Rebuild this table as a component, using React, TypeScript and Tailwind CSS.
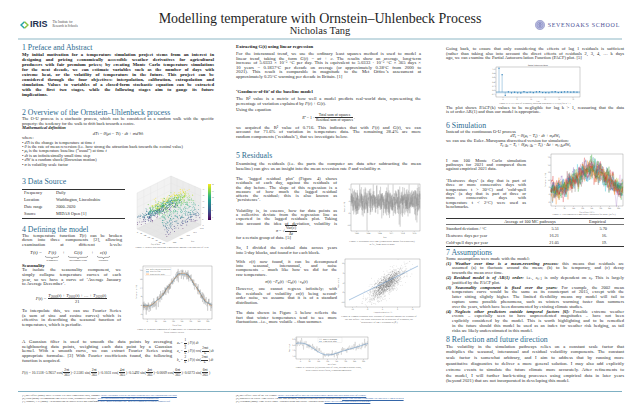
import React from 'react';

type N = React.ReactNode;

// deterministic noise so every render draws the same plots
function rng(seed: number) {
  let s = seed >>> 0;
  return () => {
    s = (s + 0x6d2b79f5) | 0;
    let t = Math.imul(s ^ (s >>> 15), 1 | s);
    t = (t + Math.imul(t ^ (t >>> 7), 61 | t)) ^ t;
    return ((t ^ (t >>> 14)) >>> 0) / 4294967296;
  };
}
function gauss(r: () => number) {
  const u = Math.max(r(), 1e-9);
  return Math.sqrt(-2 * Math.log(u)) * Math.cos(2 * Math.PI * r());
}
function seasonal(t: number) {
  const w = (2 * Math.PI * t) / 365;
  return 10.1518 - 5.9657 * Math.cos(w) - 2.5581 * Math.sin(w) + 0.1031 * Math.cos(2 * w) + 0.5492 * Math.sin(2 * w);
}
const VIR = ['#440154', '#482878', '#3e4989', '#31688e', '#26828e', '#1f9e89', '#35b779', '#6ece58', '#b5de2b', '#fde725'];
const vir = (v: number) => VIR[Math.max(0, Math.min(9, Math.floor(v * 10)))];
const TAB = ['#1f77b4', '#ff7f0e', '#2ca02c', '#d62728', '#9467bd', '#8c564b', '#e377c2', '#7f7f7f', '#bcbd22', '#17becf'];
const poly = (pts: [number, number][]) => pts.map((p) => p[0].toFixed(2) + ',' + p[1].toFixed(2)).join(' ');

function Frame({ x0, y0, x1, y1, xt = [], yt = [] }: { x0: number; y0: number; x1: number; y1: number; xt?: string[]; yt?: string[] }) {
  return (
    <g>
      <rect x={x0} y={y0} width={x1 - x0} height={y1 - y0} fill="none" stroke="#666" strokeWidth={0.3} />
      {xt.map((t, i) => {
        const x = x0 + ((x1 - x0) * (i + 0.5)) / xt.length;
        return (
          <g key={'x' + i}>
            <line x1={x} x2={x} y1={y1} y2={y1 + 0.8} stroke="#666" strokeWidth={0.25} />
            <text x={x} y={y1 + 2.6} fontSize={1.6} textAnchor="middle" fill="#444">{t}</text>
          </g>
        );
      })}
      {yt.map((t, i) => {
        const y = y1 - ((y1 - y0) * (i + 0.5)) / yt.length;
        return (
          <g key={'y' + i}>
            <line x1={x0 - 0.8} x2={x0} y1={y} y2={y} stroke="#666" strokeWidth={0.25} />
            <text x={x0 - 1.2} y={y + 0.55} fontSize={1.6} textAnchor="end" fill="#444">{t}</text>
          </g>
        );
      })}
    </g>
  );
}

function Fig3D() {
  const r = rng(21);
  const H = 36;
  const P = (d: number, y: number, z: number): [number, number] => [8 + d * 30 + y * 34, 57 + d * 13 - y * 17 - z * H];
  const pts: N[] = [];
  for (let k = 0; k < 1100; k++) {
    const d = r();
    const y = r();
    const T = seasonal(d * 365) + 0.6 * y + gauss(r) * 2.6;
    const z = Math.max(0, Math.min(1, (T + 4) / 28));
    const [sx, sy] = P(d, y, z);
    pts.push(<circle key={k} cx={sx} cy={sy} r={0.42} fill={vir((T + 2) / 22)} />);
  }
  const pane = (a: [number, number][]) => poly(a);
  const grid: N[] = [];
  for (let i = 1; i < 5; i++) {
    const v = i / 5;
    grid.push(<line key={'a' + i} x1={P(0, 0, v)[0]} y1={P(0, 0, v)[1]} x2={P(0, 1, v)[0]} y2={P(0, 1, v)[1]} stroke="#ddd" strokeWidth={0.25} />);
    grid.push(<line key={'b' + i} x1={P(0, 1, v)[0]} y1={P(0, 1, v)[1]} x2={P(1, 1, v)[0]} y2={P(1, 1, v)[1]} stroke="#ddd" strokeWidth={0.25} />);
    grid.push(<line key={'c' + i} x1={P(0, v, 0)[0]} y1={P(0, v, 0)[1]} x2={P(0, v, 1)[0]} y2={P(0, v, 1)[1]} stroke="#ddd" strokeWidth={0.25} />);
    grid.push(<line key={'d' + i} x1={P(v, 1, 0)[0]} y1={P(v, 1, 0)[1]} x2={P(v, 1, 1)[0]} y2={P(v, 1, 1)[1]} stroke="#ddd" strokeWidth={0.25} />);
    grid.push(<line key={'e' + i} x1={P(v, 0, 0)[0]} y1={P(v, 0, 0)[1]} x2={P(v, 1, 0)[0]} y2={P(v, 1, 0)[1]} stroke="#ddd" strokeWidth={0.25} />);
    grid.push(<line key={'f' + i} x1={P(0, v, 0)[0]} y1={P(0, v, 0)[1]} x2={P(1, v, 0)[0]} y2={P(1, v, 0)[1]} stroke="#ddd" strokeWidth={0.25} />);
  }
  const days = ['0', '50', '100', '150', '200', '250', '300', '350'];
  const years = ['2000', '2005', '2010', '2015', '2020'];
  return (
    <svg width={86} height={74} viewBox="0 0 86 74" fontFamily="DejaVu Sans">
      <defs>
        <linearGradient id="vir" x1="0" y1="1" x2="0" y2="0">
          {VIR.map((c, i) => (
            <stop key={i} offset={i / 9} stopColor={c} />
          ))}
        </linearGradient>
      </defs>
      <polygon points={pane([P(0, 0, 0), P(0, 1, 0), P(0, 1, 1), P(0, 0, 1)])} fill="#f2f2f2" stroke="#d0d0d0" strokeWidth={0.25} />
      <polygon points={pane([P(0, 1, 0), P(1, 1, 0), P(1, 1, 1), P(0, 1, 1)])} fill="#ececec" stroke="#d0d0d0" strokeWidth={0.25} />
      <polygon points={pane([P(0, 0, 0), P(1, 0, 0), P(1, 1, 0), P(0, 1, 0)])} fill="#e6e6e6" stroke="#d0d0d0" strokeWidth={0.25} />
      {grid}
      {pts}
      {days.map((t, i) => {
        const [x, y] = P((i + 0.5) / days.length, 0, 0);
        return <text key={t} x={x - 1.5} y={y + 3} fontSize={1.5} fill="#444" textAnchor="middle">{t}</text>;
      })}
      {years.map((t, i) => {
        const [x, y] = P(1, (i + 0.5) / years.length, 0);
        return <text key={t} x={x + 2} y={y + 2.5} fontSize={1.5} fill="#444">{t}</text>;
      })}
      {['-5', '0', '5', '10', '15', '20', '25'].map((t, i) => {
        const [x, y] = P(1, 1, i / 6);
        return <text key={t} x={x + 1.2} y={y + 0.5} fontSize={1.5} fill="#444">{t}</text>;
      })}
      <rect x={79} y={12} width={3} height={36} fill="url(#vir)" />
      {['-5', '0', '5', '10', '15', '20'].map((t, i) => (
        <text key={t} x={82.8} y={46 - i * 6.6} fontSize={1.4} fill="#444">{t}</text>
      ))}
      <text x={22} y={72.5} fontSize={1.6} fill="#444">Day of Year</text>
      <text x={62} y={70} fontSize={1.6} fill="#444">Year</text>
    </svg>
  );
}

function FigSeason() {
  const r = rng(3);
  const x0 = 9, x1 = 78, y0 = 2, y1 = 55;
  const X = (t: number) => x0 + (t / 365) * (x1 - x0);
  const Y = (v: number) => y1 - ((v + 1) / 21) * (y1 - y0);
  const raw: [number, number][] = [];
  const smooth: [number, number][] = [];
  const fit: [number, number][] = [];
  for (let t = 0; t <= 365; t++) {
    const f = seasonal(t);
    raw.push([X(t), Y(f + gauss(r) * 1.1)]);
    if (t % 3 === 0) {
      smooth.push([X(t), Y(f + 0.35 * Math.sin(t / 9))]);
      fit.push([X(t), Y(f)]);
    }
  }
  return (
    <svg width={80} height={64} viewBox="0 0 80 64" fontFamily="DejaVu Sans">
      <Frame x0={x0} y0={y0} x1={x1} y1={y1} xt={['0', '50', '100', '150', '200', '250', '300', '350']} yt={['0', '4', '8', '12', '16', '20']} />
      <polyline points={poly(raw)} fill="none" stroke="#9a9a9a" strokeWidth={0.3} />
      <polyline points={poly(smooth)} fill="none" stroke="#1f77b4" strokeWidth={0.5} />
      <polyline points={poly(fit)} fill="none" stroke="#ff7f0e" strokeWidth={0.5} strokeDasharray="1.2 0.6" />
      <rect x={11} y={3.5} width={26} height={8} fill="#fff" stroke="#ccc" strokeWidth={0.25} />
      {[['#9a9a9a', 'Daily average temperature'], ['#1f77b4', 'Gaussian filter'], ['#ff7f0e', 'Fitted Fourier Series']].map(([c, t], i) => (
        <g key={t}>
          <line x1={12} x2={15} y1={5.5 + i * 2.3} y2={5.5 + i * 2.3} stroke={c} strokeWidth={0.5} />
          <text x={16} y={6 + i * 2.3} fontSize={1.5} fill="#333">{t}</text>
        </g>
      ))}
      <text x={43} y={62} fontSize={1.6} fill="#444" textAnchor="middle">Day of Year</text>
      <text x={2.5} y={28} fontSize={1.6} fill="#444" textAnchor="middle" transform="rotate(-90 2.5 28)">Temperature (°C)</text>
    </svg>
  );
}

function FigResid() {
  const r = rng(5);
  const x0 = 8, x1 = 77, y0 = 2, y1 = 49;
  const pts: [number, number][] = [];
  for (let i = 0; i < 900; i++) {
    let v = gauss(r) * 2.4;
    if (r() < 0.03) v -= 5 * r();
    const y = Math.max(y0 + 0.5, Math.min(y1 - 0.5, 19 - v * 2.6));
    pts.push([x0 + ((x1 - x0) * i) / 899, y]);
  }
  return (
    <svg width={78} height={58} viewBox="0 0 78 58" fontFamily="DejaVu Sans">
      <Frame x0={x0} y0={y0} x1={x1} y1={y1} xt={['2000', '2004', '2008', '2012', '2016', '2020']} yt={['-10', '-5', '0', '5']} />
      <polyline points={poly(pts)} fill="none" stroke="#8a8a8a" strokeWidth={0.22} />
      <text x={42} y={55.5} fontSize={1.6} fill="#444" textAnchor="middle">Year</text>
      <text x={2} y={25} fontSize={1.6} fill="#444" textAnchor="middle" transform="rotate(-90 2 25)">Residual (°C)</text>
    </svg>
  );
}

function FigScatter() {
  const r = rng(9);
  const x0 = 8, x1 = 83, y0 = 2, y1 = 50;
  const pts: N[] = [];
  for (let i = 0; i < 1500; i++) {
    const a = gauss(r);
    const b = 0.72 * a + 0.62 * gauss(r);
    const x = 50 + a * 8.5;
    const y = 27 - b * 8;
    if (x > x0 + 0.5 && x < x1 - 0.5 && y > y0 + 0.5 && y < y1 - 0.5) pts.push(<circle key={i} cx={x} cy={y} r={0.4} fill="#555" fillOpacity={0.3} />);
  }
  return (
    <svg width={84} height={58} viewBox="0 0 84 58" fontFamily="DejaVu Sans">
      <Frame x0={x0} y0={y0} x1={x1} y1={y1} xt={['-10', '-5', '0', '5', '10']} yt={['-10', '-5', '0', '5', '10']} />
      {pts}
      <line x1={12} y1={43} x2={81} y2={9} stroke="#5b8fc4" strokeWidth={0.5} />
      <text x={46} y={56} fontSize={1.6} fill="#444" textAnchor="middle">Lagged residual ε(t−1)</text>
      <text x={2} y={26} fontSize={1.6} fill="#444" textAnchor="middle" transform="rotate(-90 2 26)">Residual ε(t)</text>
    </svg>
  );
}

function FigVol() {
  const r = rng(13);
  const x0 = 8, x1 = 80, y0 = 2, y1 = 24;
  const X = (t: number) => x0 + (t / 365) * (x1 - x0);
  const Y = (v: number) => y1 - ((v - 1.6) / 2.2) * (y1 - y0);
  const raw: [number, number][] = [];
  const sm: [number, number][] = [];
  for (let t = 0; t <= 365; t += 2) {
    const w = (2 * Math.PI * t) / 365;
    const f = 2.6 + 0.55 * Math.cos(w) + 0.12 * Math.sin(2 * w);
    raw.push([X(t), Y(f + gauss(r) * 0.22)]);
    sm.push([X(t), Y(f)]);
  }
  return (
    <svg width={82} height={31} viewBox="0 0 82 31" fontFamily="DejaVu Sans">
      <Frame x0={x0} y0={y0} x1={x1} y1={y1} xt={['0', '50', '100', '150', '200', '250', '300', '350']} yt={['2.0', '2.5', '3.0', '3.5']} />
      <polyline points={poly(raw)} fill="none" stroke="#aaa" strokeWidth={0.3} />
      <polyline points={poly(sm)} fill="none" stroke="#4f86bd" strokeWidth={0.55} />
      <rect x={30} y={2.8} width={24} height={5} fill="#fff" stroke="#ccc" strokeWidth={0.25} />
      <line x1={31} x2={34} y1={4.3} y2={4.3} stroke="#aaa" strokeWidth={0.4} />
      <text x={35} y={4.8} fontSize={1.4} fill="#333">Volatility (averaged)</text>
      <line x1={31} x2={34} y1={6.5} y2={6.5} stroke="#4f86bd" strokeWidth={0.4} />
      <text x={35} y={7} fontSize={1.4} fill="#333">Fitted Fourier series</text>
      <text x={44} y={30} fontSize={1.5} fill="#444" textAnchor="middle">Day of Year</text>
      <text x={2} y={13} fontSize={1.5} fill="#444" textAnchor="middle" transform="rotate(-90 2 13)">Volatility σ</text>
    </svg>
  );
}

function FigPacf() {
  const x0 = 8, x1 = 92, y0 = 4, y1 = 34;
  const Y = (v: number) => y1 - ((v + 0.2) / 1.25) * (y1 - y0);
  const r = rng(17);
  const vals = [1, 0.73, -0.13];
  for (let k = 3; k <= 25; k++) vals.push((r() - 0.5) * 0.08);
  const X = (k: number) => x0 + 3 + (k * (x1 - x0 - 6)) / 25;
  return (
    <svg width={94} height={39} viewBox="0 0 94 39" fontFamily="DejaVu Sans">
      <text x={50} y={3} fontSize={1.8} fill="#333" textAnchor="middle">Partial Autocorrelation</text>
      <Frame x0={x0} y0={y0} x1={x1} y1={y1} xt={['0', '5', '10', '15', '20', '25']} yt={['-0.2', '0.0', '0.2', '0.4', '0.6', '0.8', '1.0']} />
      <rect x={x0} y={Y(0.05)} width={x1 - x0} height={Y(-0.05) - Y(0.05)} fill="#1f77b4" fillOpacity={0.18} />
      <line x1={x0} x2={x1} y1={Y(0)} y2={Y(0)} stroke="#1f77b4" strokeWidth={0.3} />
      {vals.map((v, k) => (
        <g key={k}>
          <line x1={X(k)} x2={X(k)} y1={Y(0)} y2={Y(v)} stroke="#1f77b4" strokeWidth={0.35} />
          <circle cx={X(k)} cy={Y(v)} r={0.65} fill="#1f77b4" />
        </g>
      ))}
      <text x={50} y={38.5} fontSize={1.6} fill="#444" textAnchor="middle">Lag</text>
    </svg>
  );
}

function FigSim() {
  const x0 = 7, x1 = 79, y0 = 2, y1 = 54;
  const X = (t: number) => x0 + (t / 365) * (x1 - x0);
  const Y = (v: number) => y1 - ((v + 6) / 34) * (y1 - y0);
  const lines: N[] = [];
  for (let p = 0; p < 14; p++) {
    const r = rng(100 + p);
    let e = 0;
    const pts: [number, number][] = [];
    for (let t = 0; t <= 365; t += 2) {
      e = 0.7 * e + gauss(r) * 2.3;
      pts.push([X(t), Y(seasonal(t) + 0.8 + e)]);
    }
    lines.push(<polyline key={p} points={poly(pts)} fill="none" stroke={TAB[p % 10]} strokeWidth={0.3} strokeOpacity={0.85} />);
  }
  return (
    <svg width={80} height={61} viewBox="0 0 80 61" fontFamily="DejaVu Sans">
      <Frame x0={x0} y0={y0} x1={x1} y1={y1} xt={['0', '50', '100', '150', '200', '250', '300', '350']} yt={['-5', '0', '5', '10', '15', '20', '25']} />
      {lines}
      <text x={43} y={60.5} fontSize={1.6} fill="#444" textAnchor="middle">Day of Year (2021)</text>
      <text x={1.8} y={28} fontSize={1.6} fill="#444" textAnchor="middle" transform="rotate(-90 1.8 28)">Temperature (°C)</text>
    </svg>
  );
}

function Para({ lines, className = '', justifyLast = false, hang = false }: { lines: N[]; className?: string; justifyLast?: boolean; hang?: boolean }) {
  return (
    <div className={className}>
      {lines.map((l, i) => {
        const j = i < lines.length - 1 || justifyLast;
        return (
          <div key={i} className={`${j ? 'text-justify [text-align-last:justify]' : ''} ${hang && i > 0 ? 'pl-[6px]' : ''}`}>
            {l}
          </div>
        );
      })}
    </div>
  );
}

function H({ children, className = '' }: { children: N; className?: string }) {
  return <div className={`text-[7.8px] leading-[9px] text-[#2c6b8f] whitespace-nowrap ${className}`}>{children}</div>;
}

function Cap({ lines, className = '' }: { lines: N[]; className?: string }) {
  return (
    <div className={`text-[2.5px] leading-[3px] text-[#555] text-center ${className}`}>
      {lines.map((l, i) => (
        <div key={i}>{l}</div>
      ))}
    </div>
  );
}

function Frac({ n, d }: { n: N; d: N }) {
  return (
    <span className="inline-flex flex-col items-center align-middle leading-[1.15] mx-[0.5px]">
      <span className="px-[0.5px]">{n}</span>
      <span className="px-[0.5px] border-t-[0.5px] border-[#333] self-stretch text-center">{d}</span>
    </span>
  );
}

function Brace({ term, label, w }: { term: N; label: string; w: number }) {
  const m = w / 2;
  return (
    <span className="inline-flex flex-col items-center">
      <span>{term}</span>
      <svg width={w} height={3} viewBox={`0 0 ${w} 3`}>
        <path d={`M0.3 0 Q0.3 1.4 2 1.4 L${m - 1.5} 1.4 Q${m} 1.4 ${m} 2.8 Q${m} 1.4 ${m + 1.5} 1.4 L${w - 2} 1.4 Q${w - 0.3} 1.4 ${w - 0.3} 0`} stroke="#333" strokeWidth={0.4} fill="none" />
      </svg>
      <span className="not-italic text-[2.6px] leading-[3px] whitespace-nowrap">{label}</span>
    </span>
  );
}

function Header() {
  return (
    <div className="h-[38px] grid grid-cols-[1fr_auto_1fr] px-[20px]">
      <div className="self-start pt-[20px] flex items-center">
        <svg width={9} height={8} viewBox="0 0 18 16">
          <path d="M9 1.5 L2 8 L9 14.5" stroke="#26a3a6" strokeWidth={3} fill="none" />
          <path d="M9 1.5 L16 8 L9 14.5" stroke="#8cc540" strokeWidth={3} fill="none" />
        </svg>
        <span className="ml-[1px] font-['Liberation_Sans',Arial,sans-serif] font-bold text-[9px] leading-[9px] text-[#23304f]">IRIS</span>
        <span className="ml-[5px] text-[3.1px] leading-[3.4px] text-[#444]">
          The Institute for
          <br />
          Research in Schools
        </span>
      </div>
      <div className="self-start pt-[12px] text-center text-[#1f1f1f]">
        <div className="text-[14px] leading-[14px] whitespace-nowrap">Modelling temperature with Ornstein–Uhlenbeck Process</div>
        <div className="text-[10.5px] leading-[10px]">Nicholas Tang</div>
      </div>
      <div className="self-start justify-self-end pt-[20px] flex items-center">
        <svg width={10} height={10} viewBox="0 0 20 20">
          <circle cx={10} cy={10} r={9.3} fill="#b8bbe0" stroke="#7a7eb9" strokeWidth={1} />
          <circle cx={10} cy={10} r={6} fill="none" stroke="#7a7eb9" strokeWidth={0.8} />
          <path d="M10 5 L10 15 M6.5 9 Q10 5 13.5 9 M7 12 L13 12" stroke="#6a6eae" strokeWidth={1} fill="none" />
        </svg>
        <span className="ml-[3px] text-[6px] leading-[6px] tracking-[0.7px] text-[#4d5196]">SEVENOAKS SCHOOL</span>
      </div>
    </div>
  );
}

function LeftCol() {
  const body = 'text-[4.7px] leading-[4.6px]';
  return (
    <div className="w-[192px] flex flex-col">
      <H>1 Preface and Abstract</H>
      <Para
        className="text-[4.7px] leading-[5px] font-bold text-[#161616]"
        lines={[
          'My initial motivation for a temperature simulation project stems from an interest in',
          'designing and pricing economically accessible weather derivatives for agricultural',
          'producers with fair premium prices; by creating Monte Carlo temperature simulations',
          'for the next decade, we can estimate variables such as the number of days with',
          'extreme heat, or the volatility of temperature in the future. This project can be',
          'considered through the four objectives: interpolation, calibration, extrapolation and',
          'simulation. Values to variables of a closed-form stochastic equation can be extracted',
          'with the first two stages, while the following stages aim to gauge its future',
          'implications.',
        ]}
      />
      <H className="mt-[11px]">2 Overview of the Ornstein–Uhlenbeck process</H>
      <Para
        className="text-[4.3px] leading-[4.5px]"
        lines={[
          'The O-U process is a stochastic process, which can be considered as a random walk with the specific',
          'property: the tendency for the walk to drift back towards a centre.',
        ]}
      />
      <div className="text-[4.4px] leading-[4.5px] font-bold italic text-[#161616]">Mathematical definition</div>
      <div className="text-[4.6px] leading-[5.5px] text-center">
        <i>dT</i>
        <sub>t</sub> = <i>θ</i>(<i>μ</i>
        <sub>t</sub> − <i>T</i>
        <sub>t</sub>) · <i>dt</i> + <i>σ</i>
        <sub>t</sub>
        <i>dW</i>
        <sub>t</sub>
      </div>
      <div className="text-[4.3px] leading-[4.5px]">where:</div>
      <div className="text-[4.3px] leading-[4.4px]">
        <div>
          • <i>dT</i>
          <sub>t</sub> is the change in temperature at time <i>t</i>
        </div>
        <div>
          • <i>θ</i> is the rate of mean reversion (i.e. how strong the attraction back towards the central value)
        </div>
        <div>
          • <i>μ</i>
          <sub>t</sub> is the temperature baseline (“usual”) at time <i>t</i>
        </div>
        <div>
          • <i>dt</i> is an infinitesimally small time step
        </div>
        <div>
          • <i>dW</i> is a random shock (Brownian motion)
        </div>
        <div>
          • <i>σ</i> is volatility scale factor
        </div>
      </div>

      <div className="mt-[10px] flex">
        <div className="w-[108px] flex flex-col">
          <H>3 Data Source</H>
          <div className="mt-[3px] w-[103px] border-t-[0.8px] border-b-[0.8px] border-[#333] text-[4.3px] leading-[6.9px]">
            {[
              ['Frequency', 'Daily'],
              ['Location', 'Waddington, Lincolnshire'],
              ['Date range', '2000–2020'],
              ['Source', 'MIDAS Open [1]'],
            ].map(([a, b]) => (
              <div key={a} className="flex">
                <span className="w-[34px] pl-[2px]">{a}</span>
                <span>{b}</span>
              </div>
            ))}
          </div>
          <H className="mt-[6px]">4 Defining the model</H>
          <Para
            className={`${body} w-[100px]`}
            lines={[
              <>
                The temperature function <i>T</i>(<i>t</i>) can be broken
              </>,
              'down into three components [2], allowing',
              'examination at different levels:',
            ]}
            justifyLast
          />
          <div className="mt-[3px] w-[96px] flex items-start justify-center gap-[3px] text-[5px] leading-[5.5px] italic">
            <span>T(t) =</span>
            <Brace term="F(t)" label="seasonality" w={14} />
            <span className="not-italic">+</span>
            <Brace term="G(t)" label="interannual trend" w={20} />
            <span className="not-italic">+</span>
            <Brace term="ε(t)" label="residuals" w={13} />
          </div>
        </div>
        <div className="-mt-[5px] ml-[4px] w-[86px] flex flex-col">
          <Fig3D />
          <Cap lines={['Figure 1: Scatter plot showing Temperature against Year and Day of Year']} />
        </div>
      </div>

      <div className="mt-[2px] flex">
        <div className="w-[100px] flex flex-col">
          <div className="text-[4.7px] leading-[4.6px] font-bold text-[#161616]">Seasonality</div>
          <Para
            className={body}
            lines={['To isolate the seasonality component, we', 'simply collapse temperature curves of each', 'year, so we have a curve of ‘Average January', 'to Average December’.']}
          />
          <div className="mt-[6px] flex items-center justify-center text-[4.4px] leading-[5px] whitespace-nowrap">
            <i>F</i>(<i>t</i>) =&nbsp;
            <Frac
              n={
                <>
                  <i>T</i>
                  <sub>2000</sub>(<i>t</i>) + <i>T</i>
                  <sub>2001</sub>(<i>t</i>) + … + <i>T</i>
                  <sub>2020</sub>(<i>t</i>)
                </>
              }
              d="21"
            />
          </div>
          <Para
            className={`${body} mt-[5px]`}
            lines={['To interpolate this, we can use Fourier Series', '(a sum of sine and cosine curves) which is', 'effective in describing the seasonal function of', 'temperatures, which is periodic.']}
          />
        </div>
        <div className="ml-[13px] w-[80px] flex flex-col">
          <FigSeason />
          <Cap lines={['Figure 2: Seasonal component of temperature vs. Gaussian-smoothed and', 'fitted Fourier Series']} />
        </div>
      </div>

      <div className="mt-[5px] flex items-center">
        <Para
          className={`${body} w-[150px]`}
          lines={[
            'A Gaussian filter is used to smooth the data points by averaging',
            'neighbouring data points, weighting each data point by a Gaussian',
            'kernel. With a smooth curve, we can extract Fourier Series using',
            'appropriate formulae. [3] With Fourier coefficients found, the following',
            'function is acquired.',
          ]}
        />
        <div className="ml-[5px] text-[3.3px] leading-[7.5px] whitespace-nowrap">
          <div>
            <i>a</i>
            <sub>0</sub> = <Frac n="1" d={<i>L</i>} /> ∫ <i>F</i>(<i>t</i>) <i>dt</i>
          </div>
          <div>
            <i>a</i>
            <sub>n</sub> = <Frac n="2" d={<i>L</i>} /> ∫ <i>F</i>(<i>t</i>) cos(<Frac n="2πnt" d="L" />) <i>dt</i>
          </div>
          <div>
            <i>b</i>
            <sub>n</sub> = <Frac n="2" d={<i>L</i>} /> ∫ <i>F</i>(<i>t</i>) sin(<Frac n="2πnt" d="L" />) <i>dt</i>
          </div>
        </div>
      </div>
      <div className="mt-[3px] text-[3.7px] leading-[8px] whitespace-nowrap">
        <i>F</i>(<i>t</i>) = 10.1518−5.9657 cos(<Frac n="2πt" d="365" />)−2.5581 sin(<Frac n="2πt" d="365" />)+0.1031 cos(<Frac n="4πt" d="365" />)+0.5492 sin(<Frac n="4πt" d="365" />)−0.0009 cos(<Frac n="6πt" d="365" />)+0.0273 sin(<Frac n="6πt" d="365" />)
      </div>
    </div>
  );
}

function MiddleCol() {
  const body = 'text-[4.65px] leading-[4.5px]';
  const nb = 'text-[4.55px] leading-[4.3px]';
  return (
    <div className="ml-[22px] w-[185px] flex flex-col">
      <div className="mt-[1px] text-[4.7px] leading-[5px] font-bold text-[#161616]">Extracting G(t) using linear regression</div>
      <Para
        className={`${body} mt-[3px]`}
        lines={[
          'For the interannual trend, we use the ordinary least squares method is used to model a',
          <>
            linear trend, taking the form <i>G</i>(<i>t</i>) = <i>αt</i> + <i>c</i>. The results show an average, long-term
          </>,
          'increase of 5.0333 × 10⁻⁵ °C per day. This is equivalent to 5.0333 · 10⁻⁵ °C × 365 days ×',
          '10 years = 0.1837°C per decade on average (or approximately 0.38°C from 2000 to',
          '2021). This result is comparable in magnitude to the Met Office’s assessment at',
          'approximately 0.25°C warming per decade in Britain. [1]',
        ]}
      />
      <div className="mt-[10px] text-[4.7px] leading-[5px] font-bold text-[#161616]">‘Goodness-of-fit’ of the baseline model</div>
      <Para
        className={`${body} mt-[3px]`}
        lines={[
          'The R² value is a metric of how well a model predicts real-world data, representing the',
          <>
            percentage of variation explained by <i>F</i>(<i>t</i>) + <i>G</i>(<i>t</i>).
          </>,
        ]}
      />
      <div className={`${body} mt-[2px]`}>Using the equation</div>
      <div className="h-[10px] flex items-center justify-center text-[3.8px] leading-[4px]">
        <i>R</i>
        <sup>2</sup>&nbsp;= 1 − <Frac n="Total sum of squares" d="Residual sum of squares" /> .
      </div>
      <Para
        className={`${body} mt-[3px]`}
        lines={[
          <>
            we acquired the R² value of 0.716. This indicates that with <i>F</i>(<i>t</i>) and <i>G</i>(<i>t</i>), we can
          </>,
          'account for 71.6% of variation in temperature data. The remaining 28.4% are more',
          'random components (‘residuals’), that we investigate below.',
        ]}
      />
      <H className="mt-[12px]">5 Residuals</H>
      <Para
        className={`${body} mt-[2px]`}
        lines={[
          'Examining the residuals (i.e. the parts the computer are data after subtracting the mean',
          <>
            baseline) can give us an insight into the mean reversion rate <i>θ</i> and volatility <i>σ</i>.
          </>,
        ]}
      />
      <div className="mt-[6px] flex">
        <div className="w-[101px] flex flex-col">
          <Para
            className={nb}
            lines={[
              'The ‘lagged residual plot’ (Figure 4) shows',
              'residuals of each day, against the residuals of',
              'the day before. The slope of this regression is a',
              'measure of how much the lagged residual',
              'affects the residual; this is also known as',
              '‘persistence’.',
            ]}
          />
          <Para
            className={`${nb} mt-[6px]`}
            justifyLast
            lines={['Volatility is, in essence, how far data points as', 'a collective deviate from the regression line as', 'expected in the lagged residuals plot. Taking', 'into account the idea of deviation, volatility is']}
          />
          <div className="h-[10px] flex items-center justify-center text-[4.2px] leading-[4px]">
            <i>σ</i>&nbsp;= √<span className="border-t-[0.5px] border-[#333]"><Frac n={<>Var(<i>ε</i>)</>} d={<>Δ<i>t</i></>} /></span>
          </div>
          <div className={nb}>for a certain group of data. [5]</div>
          <Para className={`${nb} mt-[6px]`} lines={['So, I divided the residual data across years', <>into 5-day blocks, and found <i>σ</i> for each block.</>]} />
          <Para
            className={`${nb} mt-[5px]`}
            lines={[
              <>
                With <i>ε</i>(<i>t</i>) now found, it can be decomposed
              </>,
              'into seasonal, interannual, and noise',
              'components – much like how we did for the',
              'raw temperature.',
            ]}
          />
          <div className="mt-[1px] h-[8px] flex items-center justify-center text-[4.4px] leading-[4.4px]">
            <i>σ</i>(<i>t</i>) = <i>F</i>
            <sub>σ</sub>(<i>t</i>) + <i>G</i>
            <sub>σ</sub>(<i>t</i>) + <i>ε</i>
            <sub>σ</sub>(<i>t</i>)
          </div>
          <Para
            className="text-[4.55px] leading-[4.5px] mt-[1px]"
            lines={[
              'However, one cannot regress infinitely; with',
              <>
                the residuals of volatility <i>ε</i>
                <span className="text-[3.2px] align-[-0.4px]">σ</span>(<i>t</i>) being second-
              </>,
              'order noise, we assume that it is of a standard',
              'distribution.',
            ]}
          />
          <Para
            className={`${nb} mt-[6px]`}
            lines={['The data shown in Figure 5 below reflects the', 'fact that winter temperatures tend to see more', 'fluctuations –i.e., more volatile – than summer.']}
          />
        </div>
        <div className="w-[84px] flex flex-col items-end">
          <div className="mt-[5px]">
            <FigResid />
          </div>
          <Cap className="w-[78px]" lines={['Figure 3: Residuals over time (temperature minus fitted baseline)', 'in °C, from 2000 to 2020']} />
          <div className="mt-[11px]">
            <FigScatter />
          </div>
          <Cap className="w-[84px]" lines={['Figure 4: Lagged residuals plot: residual of each day against the residual of', 'the day before. The slope represents the persistence of residuals; the', '‘persistence’ of lag-1 residuals is (β₁)']} />
        </div>
      </div>
      <div className="mt-[11px] mx-auto flex flex-col items-center">
        <FigVol />
        <Cap lines={['Figure 5: Volatility (σ) across Day of Year, averaged across years,', 'with Fourier series fitted, Gaussian-smoothed']} />
      </div>
    </div>
  );
}

function RightCol() {
  const body = 'text-[4.55px] leading-[4.5px]';
  const bi = 'font-bold italic text-[#161616]';
  return (
    <div className="ml-[25px] w-[178px] flex flex-col">
      <Para
        className={`${body} mt-[4px]`}
        lines={[
          'Going back, to ensure that only considering the effects of lag 1 residuals is sufficient',
          '(rather than taking also into account the direct effects of residuals 2, 3, 4, … k days',
          'ago, we can examine the Partial Autocorrelation Function (PACF) plot. [5]',
        ]}
      />
      <div className="mt-[2px] mx-auto">
        <FigPacf />
      </div>
      <Cap lines={['Figure 6: PACF plot of residuals, showing negligible PACF(k) for k > 1']} />
      <Para
        className={`${body} mt-[1px]`}
        lines={['The plot shows PACF(k) values to be negligible for lag k > 1, reassuring that the data', 'is of order AR(1) and thus our model is appropriate.']}
      />
      <H className="mt-[6px]">6 Simulation</H>
      <div className={body}>Instead of the continuous O-U process</div>
      <div className="text-[4.5px] leading-[4.5px] text-center">
        <i>dT</i>
        <sub>t</sub> = <i>θ</i>(<i>μ</i>
        <sub>t</sub> − <i>T</i>
        <sub>t</sub>) · <i>dt</i> + <i>σ</i>
        <sub>t</sub>
        <i>dW</i>
        <sub>t</sub>
      </div>
      <div className={body}>we can use the Euler–Maruyama discretised version for simulation:</div>
      <div className="text-[4.5px] leading-[4.5px] text-center">
        <i>T</i>
        <sub>t+Δt</sub> = <i>T</i>
        <sub>t</sub> + <i>θ</i>(<i>μ</i>
        <sub>t+Δt</sub> − <i>T</i>
        <sub>t</sub>) · Δ<i>t</i> + <i>σ</i>
        <sub>t+Δt</sub>
        <i>dW</i>
        <sub>t</sub>
      </div>
      <div className="mt-[4px] flex">
        <div className="w-[80px] flex flex-col">
          <Para className="mt-[7px] text-[4.5px] leading-[4.4px]" lines={['I ran 100 Monte Carlo simulation', 'pathways for 2021 and compared them', 'against empirical 2021 data.']} />
          <Para
            className="mt-[7px] text-[4.5px] leading-[4.4px]"
            lines={[
              '‘Heatwave days’ (a day that is part of',
              'three or more consecutive days with',
              'temperature t > 30°C) and ‘cold-spell',
              'days’ (a day that is part of three or',
              'more consecutive days with',
              'temperature t < 2°C) were used as',
              'benchmarks.',
            ]}
          />
        </div>
        <div className="ml-[18px] w-[80px] flex flex-col">
          <FigSim />
          <Cap lines={['Figure 7: 100 simulated temperature pathways for 2021 (in °C)']} />
        </div>
      </div>
      <div className="mt-[2px] border-t-[0.8px] border-b-[0.8px] border-[#333] text-[4.3px]">
        <div className="grid grid-cols-[52px_64px_1fr] leading-[5.5px]">
          <span />
          <span className="text-center whitespace-nowrap">Average of 100 MC pathways</span>
          <span className="text-right pr-[18px]">Empirical</span>
        </div>
        {[
          ['Standard deviation / °C', '5.51', '5.70'],
          ['Heatwave days per year', '16.21', '16.'],
          ['Cold-spell days per year', '21.05', '19.'],
        ].map(([a, b, c], i) => (
          <div key={a} className={`grid grid-cols-[52px_64px_1fr] leading-[7px] ${i === 0 ? 'border-t-[0.5px] border-[#777]' : ''}`}>
            <span className="whitespace-nowrap">{a}</span>
            <span className="text-right pr-[3px]">{b}</span>
            <span className="text-right pr-[17px]">{c}</span>
          </div>
        ))}
      </div>
      <H className="mt-[1px]">7 Assumptions</H>
      <div className="text-[4.5px] leading-[4.6px]">Some assumptions were made with the model:</div>
      <div className="text-[4.5px] leading-[4.8px]">
        <Para
          hang
          lines={[
            <>
              <span className={bi}>(1) Weather over time is a mean-reverting process:</span> this means that residuals are
            </>,
            'assumed (a) to fluctuate around the mean; (b) to be temporary, and (c) decay',
            'towards the mean over time.',
          ]}
        />
        <Para
          hang
          lines={[
            <>
              <span className={bi}>(2) Residual model is of AR(1) order:</span> i.e., <i>ε</i>
              <sub>t+1</sub> is only dependent on <i>ε</i>
              <sub>t</sub>. This is largely
            </>,
            'justified by the PACF plot.',
          ]}
        />
        <Para
          hang
          lines={[
            <>
              <span className={bi}>(3) Seasonality component is fixed over the years:</span> For example, the 2002 mean
            </>,
            'temperature curve would be the same as its counterpart of 2015, except with the',
            'latter sitting slightly higher. The limited flexibility means my model will fail to',
            'capture some possible phenomena, such as winters warming faster than summers',
            'over the years, which have been documented by existing climate studies.',
          ]}
        />
        <Para
          hang
          lines={[
            <>
              <span className={bi}>(4) Neglects other predictors outside temporal factors [6]:</span> Possible extreme weather
            </>,
            'events – especially seen to have unprecedented magnitudes – have not been',
            'explicitly considered by the model. This is worth highlighting and to be remedied',
            'in the future should this model be used as an index for weather risk hedging, as tail',
            'risks are likely underestimated in this model.',
          ]}
        />
      </div>
      <H className="mt-[1px]">8 Reflection and future direction</H>
      <Para
        className="text-[4.7px] leading-[5.8px]"
        lines={[
          'The volatility in the simulation pathways relies on a constant scale factor that',
          'multiplies the seasonal, interannual and residual volatility components. The constant',
          'scale factor is somewhat arbitrary, and I aim to address that by running more',
          'quantitative diagnostics to deliver a more general solution. I may also add explicitly',
          'extreme events to simulate the future climate more accurately. After refinements to',
          'the model, I will further back-testing processes using empirical data in later years',
          '(beyond 2021) that are not incorporated in developing this model.',
        ]}
      />
    </div>
  );
}

function Lk({ children }: { children: N }) {
  return <span className="text-[#3566a8] underline">{children}</span>;
}

function Footer() {
  return (
    <div>
      <div className="mx-[18px] h-[1px] bg-[#7fb0c3]" />
      <div className="flex pl-[22px] pt-[2px] text-[2.6px] leading-[3px] text-[#333] whitespace-nowrap">
        <div className="w-[214px] overflow-hidden">
          <div>
            [1] Met Office (2006): MIDAS Open: UK daily temperature data, v202407. <Lk>https://catalogue.ceda.ac.uk/uuid/1bb479d3b1e38c339adb9c82c15579d8</Lk>
          </div>
          <div>
            [2] Guan (2020): Decomposing time series: trend, seasonality and noise. <Lk>https://towardsdatascience.com/time-series-decomposition</Lk>
          </div>
          <div>
            [3] Tanguay, L.S. (2020): An introduction to Fourier series and transforms. <Lk>http://math.uchicago.edu/~may/REU2020/REUPapers/Tanguay.pdf</Lk>
          </div>
        </div>
        <div>
          <div>
            [4] Met Office: State of the UK climate. <Lk>https://www.metoffice.gov.uk/research/climate/maps-and-data/about/state-of-climate</Lk>
          </div>
          <div>
            [5] Brockwell &amp; Davis: Time Series: Theory and Methods, autocorrelation and partial autocorrelation <Lk>https://link.springer.com/book/10.1007/978-1-4419-0320-4</Lk>
          </div>
          <div>
            [6] Hyndman (2008): Time Series Tools: Autocorrelation and Partial Autocorrelation <Lk>https://otexts.com/fpp2/autocorrelation.html</Lk>
          </div>
        </div>
      </div>
    </div>
  );
}

export default function App() {
  return (
    <div className="w-[640px] h-[412px] overflow-hidden bg-white font-['Liberation_Serif','Times_New_Roman',serif] text-[#2a2a2a]">
      <Header />
      <div className="mx-[18px] h-[1.5px] bg-[#c6dbe2]" />
      <div className="flex h-[351px] pl-[22px] pt-[3.5px] overflow-hidden">
        <LeftCol />
        <MiddleCol />
        <RightCol />
      </div>
      <Footer />
    </div>
  );
}
